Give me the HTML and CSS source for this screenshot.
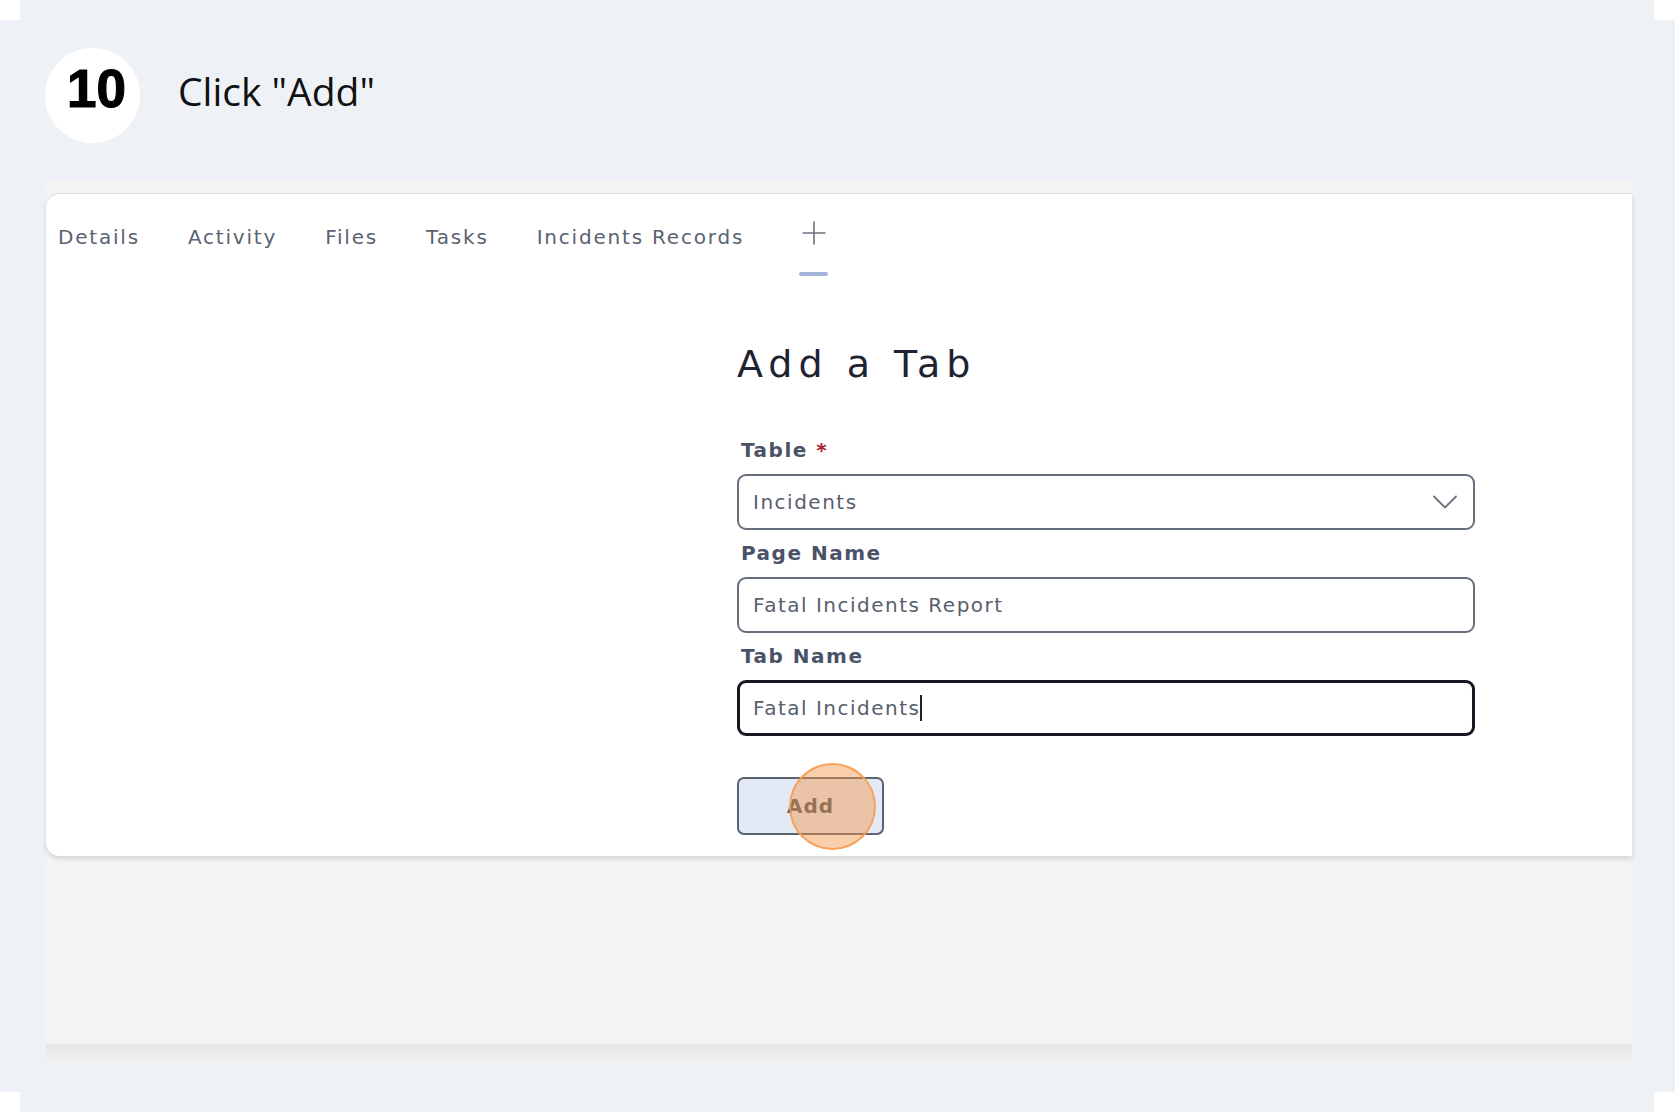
FILE: index.html
```html
<!DOCTYPE html>
<html lang="en">
<head>
<meta charset="utf-8">
<title>Click "Add"</title>
<link rel="stylesheet" href="styles.css">
</head>
<body>
<div class="strip"></div>
<main class="frame">
  <header class="step">
    <div class="step-num">10</div>
    <h1 class="step-title">Click "Add"</h1>
  </header>
  <section class="shot">
    <div class="card">
      <nav class="tabs">
        <span class="tab">Details</span>
        <span class="tab">Activity</span>
        <span class="tab">Files</span>
        <span class="tab">Tasks</span>
        <span class="tab">Incidents Records</span>
        <span class="tab-add">
          <svg viewBox="0 0 24 24" width="24" height="24"><path d="M12 0.5V23.5M0.5 12H23.5" stroke="#6b7280" stroke-width="1.6" fill="none"/></svg>
          <span class="tab-underline"></span>
        </span>
      </nav>
      <form class="form">
        <h2 class="form-title">Add a Tab</h2>
        <div class="field field-first">
          <label class="label">Table <span class="req">*</span></label>
          <div class="control select">
            <span>Incidents</span>
            <svg viewBox="0 0 24 14" width="24" height="14"><path d="M1 1.5L12 12.5L23 1.5" stroke="#6b7280" stroke-width="1.8" fill="none" stroke-linecap="round" stroke-linejoin="round"/></svg>
          </div>
        </div>
        <div class="field">
          <label class="label">Page Name</label>
          <div class="control"><span>Fatal Incidents Report</span></div>
        </div>
        <div class="field">
          <label class="label">Tab Name</label>
          <div class="control control-focus"><span class="typed">Fatal Incidents</span><span class="caret"></span></div>
        </div>
        <div class="actions">
          <button type="button" class="btn">Add<span class="click-dot"></span></button>
        </div>
      </form>
    </div>
    <div class="shot-footer"></div>
  </section>
</main>
<div class="strip"></div>
</body>
</html>
```

FILE: styles.css
```css
body {
  margin: 0;
  background: #ffffff;
  font-family: "Open Sans", "Noto Sans", sans-serif;
}

.strip {
  height: 20px;
  width: 1634px;
  margin-left: 20px;
  background: #eef2f7;
}

.frame {
  width: 1675px;
  height: 1072px;
  background: #eef2f7;
  display: flex;
  flex-direction: column;
}

.step {
  display: flex;
  align-items: center;
  padding: 28px 0 0 45px;
}

.step-num {
  width: 95px;
  height: 95px;
  box-sizing: border-box;
  padding: 0 0 14px 8px;
  border-radius: 50%;
  background: #ffffff;
  display: flex;
  align-items: center;
  justify-content: center;
  font-family: "Liberation Sans", Arial, sans-serif;
  font-weight: 700;
  font-size: 53px;
  line-height: 1;
  color: #000000;
  -webkit-text-stroke: 1.2px #000000;
}

.step-title {
  margin: 0 0 11px 38px;
  font-family: "Open Sans", sans-serif;
  font-size: 39px;
  font-weight: 400;
  line-height: 1;
  color: #111111;
}

.shot {
  margin: 37px 0 0 46px;
  width: 1586px;
  height: 886px;
  box-sizing: border-box;
  padding-top: 13px;
  background: #f4f4f4;
  display: flex;
  flex-direction: column;
  font-family: "DejaVu Sans", "Open Sans", sans-serif;
}

.card {
  height: 663px;
  box-sizing: border-box;
  background: #ffffff;
  border-top: 1px solid #dadada;
  border-radius: 14px 0 0 14px;
  box-shadow: 0 3px 5px rgba(0, 0, 0, 0.13);
}

.shot-footer {
  margin-top: auto;
  height: 22px;
  background: linear-gradient(#e6e6e6, #f2f2f2);
}

.tabs {
  display: flex;
  align-items: flex-start;
  gap: 48px;
  padding: 29px 0 0 12px;
}

.tab {
  font-size: 20px;
  line-height: 28px;
  letter-spacing: 1.8px;
  color: #5a6271;
  white-space: nowrap;
}

.tab-add {
  display: flex;
  flex-direction: column;
  align-items: center;
  width: 29px;
  margin: -2px 0 0 7px;
}

.tab-add svg {
  display: block;
}

.tab-underline {
  width: 29px;
  height: 4px;
  margin-top: 27px;
  border-radius: 2px;
  background: #a3b3d9;
}

.form {
  margin: 64px 0 0 691px;
  width: 738px;
}

.form-title {
  margin: 0;
  font-size: 38px;
  line-height: 48px;
  font-weight: 400;
  letter-spacing: 6px;
  color: #1d2331;
}

.field {
  display: flex;
  flex-direction: column;
  gap: 10px;
  margin-top: 9px;
}

.field-first {
  margin-top: 48px;
}

.label {
  padding-left: 4px;
  font-size: 20px;
  line-height: 28px;
  font-weight: 700;
  letter-spacing: 1.5px;
  color: #4a5267;
}

.req {
  color: #a6202c;
}

.control {
  height: 56px;
  box-sizing: border-box;
  border: 2px solid #676e7c;
  border-radius: 9px;
  display: flex;
  align-items: center;
  padding: 0 16px 0 14px;
  font-size: 20px;
  letter-spacing: 1.5px;
  color: #575f6d;
  background: #ffffff;
}

.select {
  justify-content: space-between;
}

.select svg {
  display: block;
}

.control-focus {
  border: 3px solid #141821;
  padding-left: 13px;
}

.caret {
  width: 2px;
  height: 26px;
  margin-left: -1px;
  background: #222222;
}

.actions {
  margin-top: 41px;
}

.btn {
  position: relative;
  width: 147px;
  height: 58px;
  padding: 0;
  border: 2px solid #5c6372;
  border-radius: 7px;
  background: #e4e9f6;
  font-family: "DejaVu Sans", sans-serif;
  font-weight: 700;
  font-size: 20px;
  letter-spacing: 1px;
  color: #4a5267;
}

.click-dot {
  position: absolute;
  left: 50px;
  top: -16px;
  width: 87px;
  height: 87px;
  box-sizing: border-box;
  border-radius: 50%;
  background: rgba(245, 150, 70, 0.45);
  border: 2px solid rgba(245, 160, 85, 0.9);
}
```
